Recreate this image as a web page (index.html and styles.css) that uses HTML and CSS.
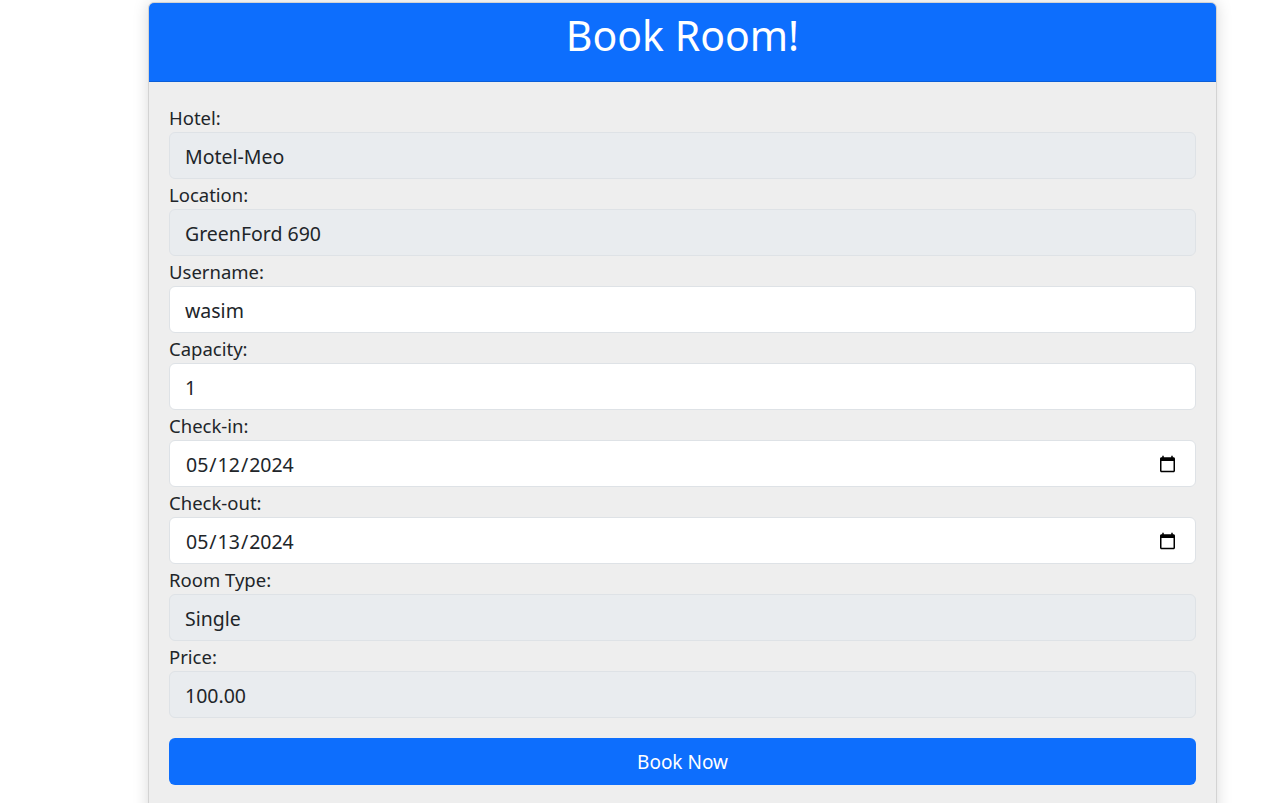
FILE: index.html
```html
<!DOCTYPE html>
<html lang="en">
<head>
<meta charset="utf-8">
<title>Book Room</title>
<link rel="stylesheet" href="styles.css">
</head>
<body>
<div class="page">
  <div class="card">
    <div class="card-header"><h1 class="title">Book Room!</h1></div>
    <form class="card-body">
      <div class="group"><label class="label">Hotel:</label><input class="field ro" type="text" value="Motel-Meo" readonly></div>
      <div class="group"><label class="label">Location:</label><input class="field ro" type="text" value="GreenFord 690" readonly></div>
      <div class="group"><label class="label">Username:</label><input class="field" type="text" value="wasim"></div>
      <div class="group"><label class="label">Capacity:</label><input class="field" type="number" value="1"></div>
      <div class="group"><label class="label">Check-in:</label><input class="field" type="date" value="2024-05-12"></div>
      <div class="group"><label class="label">Check-out:</label><input class="field" type="date" value="2024-05-13"></div>
      <div class="group"><label class="label">Room Type:</label><input class="field ro" type="text" value="Single" readonly></div>
      <div class="group"><label class="label">Price:</label><input class="field ro" type="text" value="100.00" readonly></div>
      <button class="btn" type="button">Book Now</button>
    </form>
  </div>
</div>
</body>
</html>
```
FILE: styles.css
```css
* { box-sizing: border-box; }
html, body { margin: 0; padding: 0; background: #fff; }
body {
  font-family: "Noto Sans", "Open Sans", sans-serif;
  color: #212529;
  font-size: 18px;
}
.page {
  padding: 2px 0 0 148px;
}
.card {
  width: 1069px;
  background: #eeeeee;
  border: 1px solid #d3d3d3;
  border-radius: 6px;
  box-shadow: 0 0 16px rgba(0,0,0,0.15);
  overflow: hidden;
}
.card-header {
  background: #0d6efd;
  border-bottom: 1px solid #0b5ed7;
  height: 79px;
  display: flex;
  align-items: center;
  justify-content: center;
}
.title {
  margin: 0 0 12px 0;
  color: #fff;
  font-weight: 400;
  font-size: 41px;
  line-height: 1.2;
}
.card-body {
  padding: 20px 20px 40px 20px;
  display: flex;
  flex-direction: column;
}
.group {
  display: flex;
  flex-direction: column;
}
.label {
  height: 30px;
  line-height: 32px;
  font-size: 18.5px;
}
.field {
  height: 47px;
  border: 1px solid #dee2e6;
  border-radius: 6px;
  background: #fff;
  padding: 2px 15px 0 15px;
  font-family: inherit;
  font-size: 19.5px;
  color: #212529;
  outline: none;
}
.field.ro {
  background: #e9ecef;
}
.field::-webkit-inner-spin-button { display: none; }
.field::-webkit-calendar-picker-indicator { margin-right: 1px; }
.btn {
  margin-top: 20px;
  height: 47px;
  border: none;
  border-radius: 6px;
  background: #0d6efd;
  color: #fff;
  font-family: inherit;
  font-size: 19px;
  padding-top: 2px;
}
```
